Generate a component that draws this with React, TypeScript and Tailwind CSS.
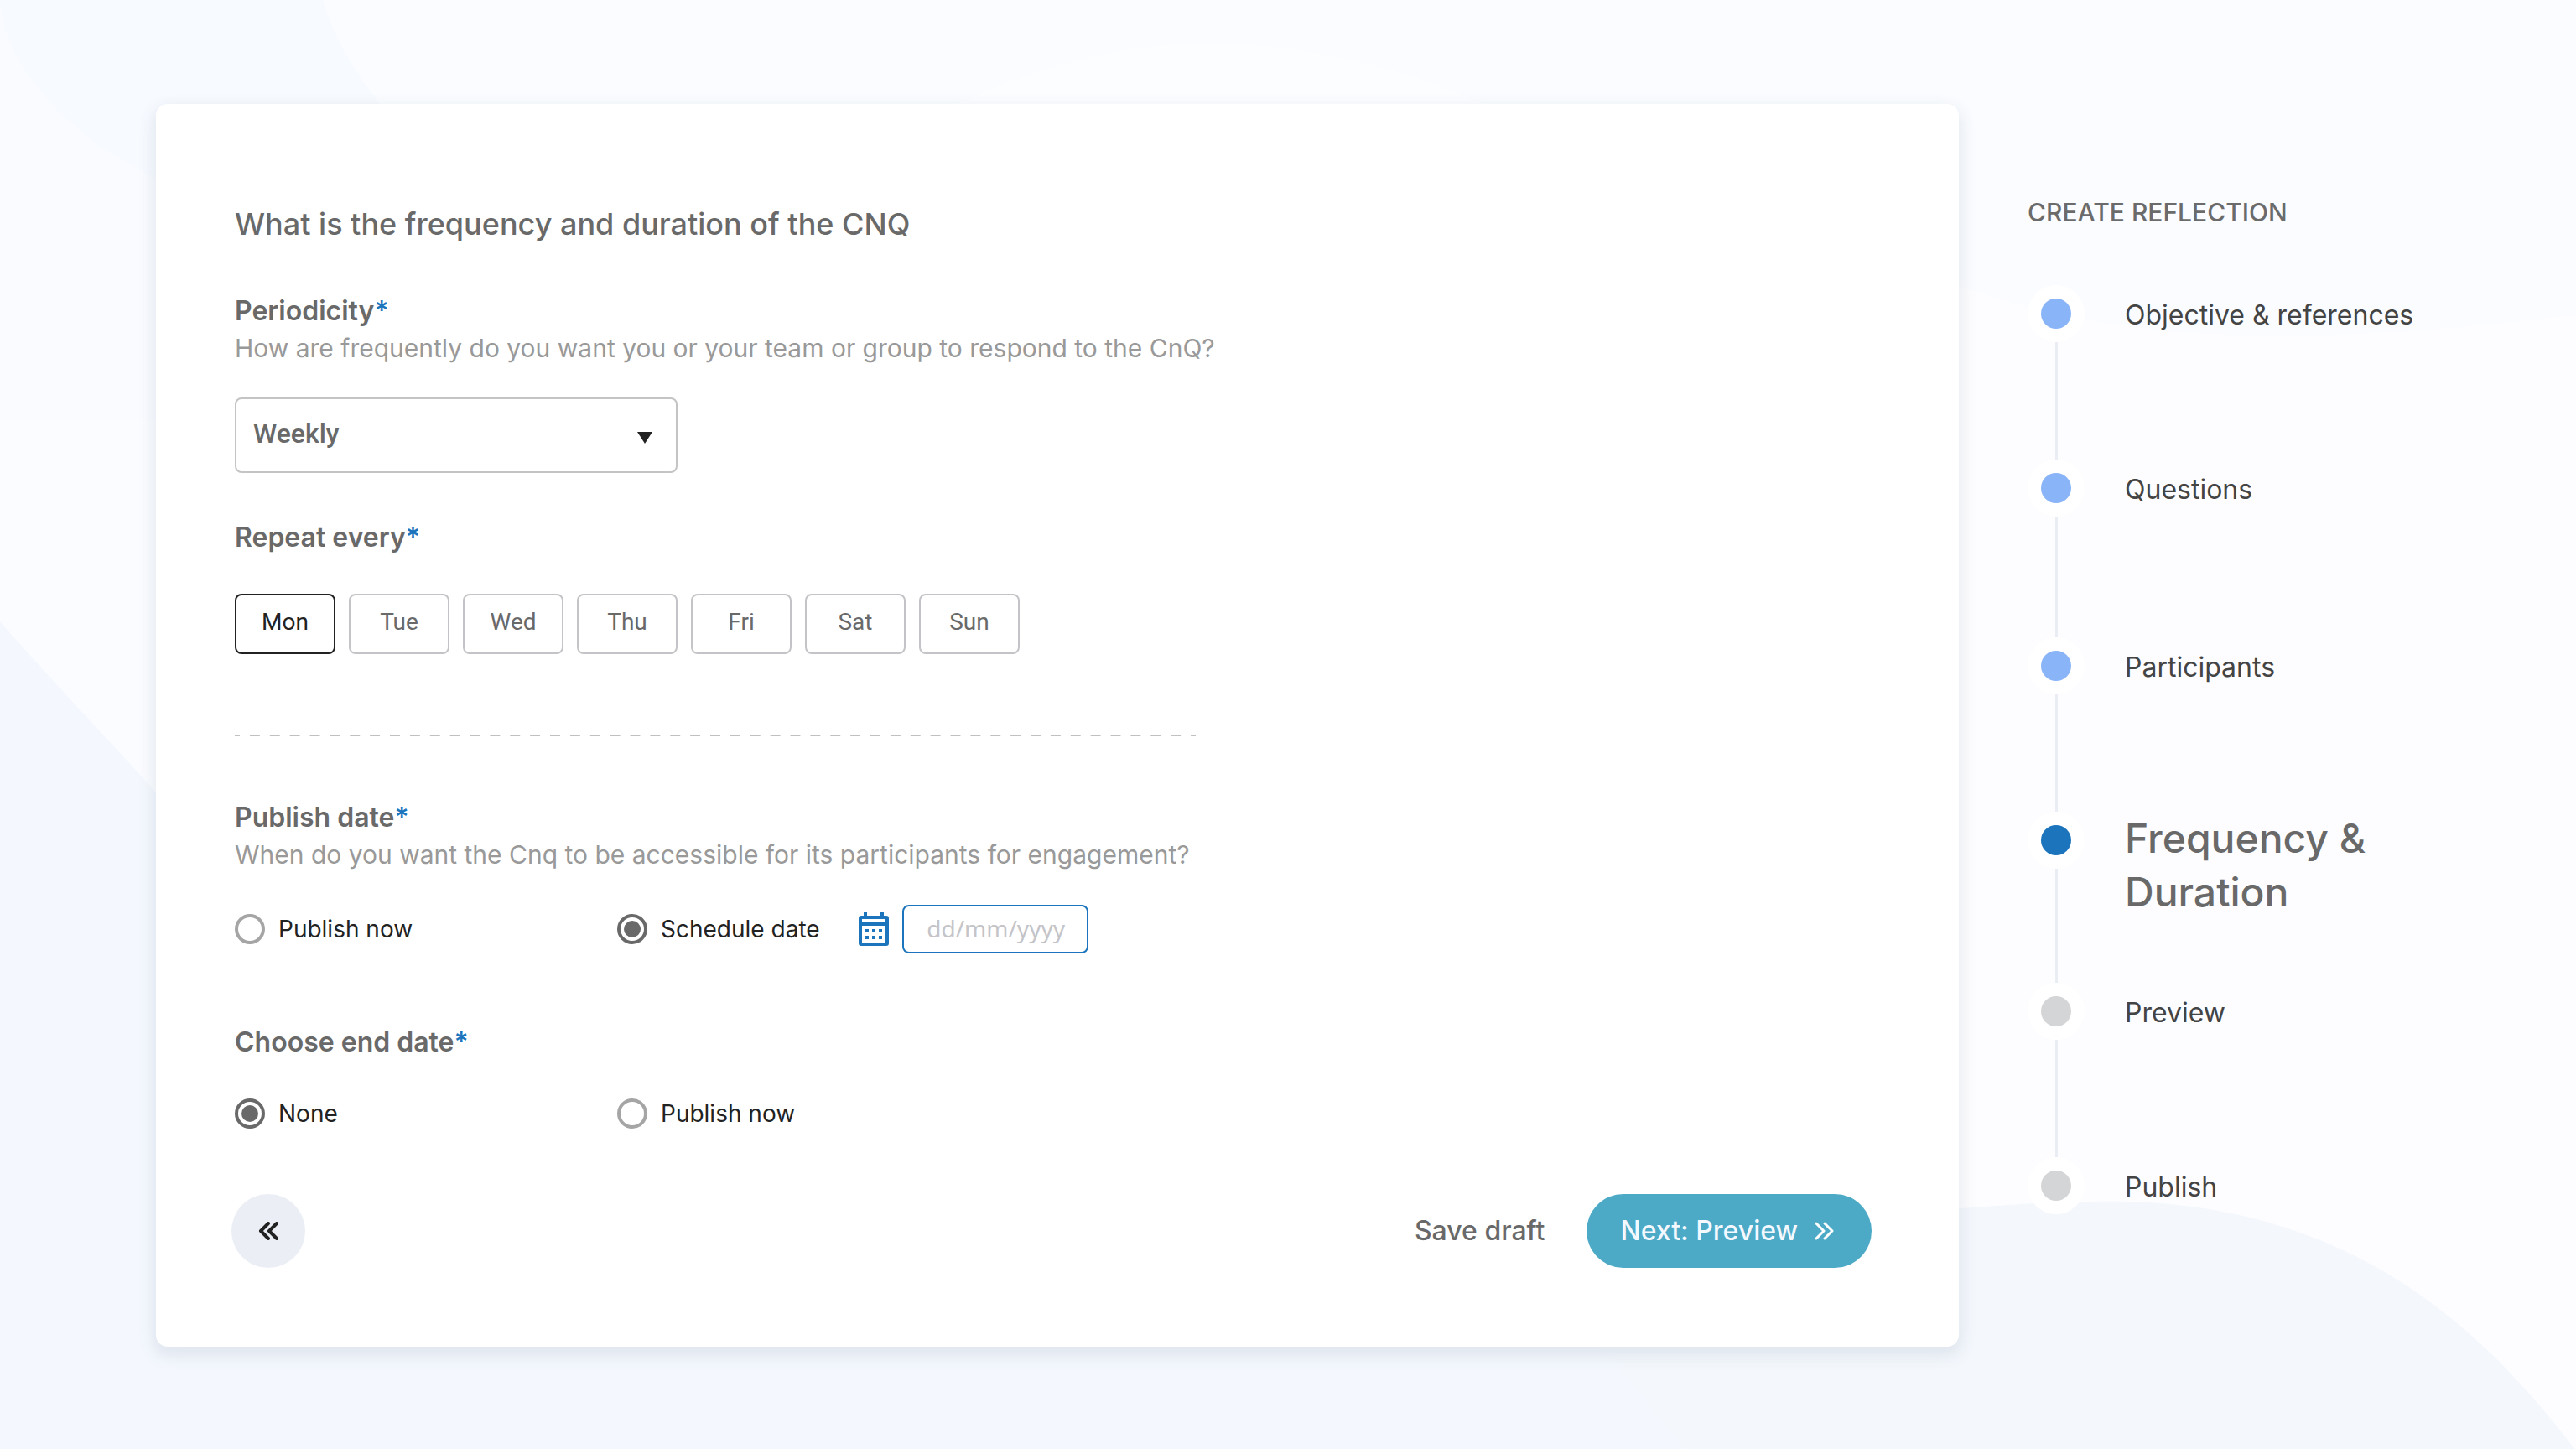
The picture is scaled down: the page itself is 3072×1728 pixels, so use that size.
import React, { useState } from 'react';

const DAYS = ['Mon', 'Tue', 'Wed', 'Thu', 'Fri', 'Sat', 'Sun'];

type StepState = 'done' | 'current' | 'todo';

const STEPS: { label: string; state: StepState }[] = [
  { label: 'Objective & references', state: 'done' },
  { label: 'Questions', state: 'done' },
  { label: 'Participants', state: 'done' },
  { label: 'Frequency & Duration', state: 'current' },
  { label: 'Preview', state: 'todo' },
  { label: 'Publish', state: 'todo' },
];

const DOT_COLORS: Record<StepState, string> = {
  done: 'bg-[#8ab4f8]',
  current: 'bg-[#1c75bc]',
  todo: 'bg-[#d4d5d7]',
};

const Backdrop = () => (
  <svg
    className="absolute inset-0 -z-10 h-full w-full"
    viewBox="0 0 3072 1728"
    preserveAspectRatio="none"
    aria-hidden="true"
  >
    <rect width="3072" height="1728" fill="#fafcff" />
    <path d="M0 0H385C400 50 425 90 470 145L700 500H0Z" fill="#f7faff" />
    <path d="M0 0C5 70 60 130 120 175L190 215V500H0Z" fill="#f9fbff" />
    <path d="M1130 130C1250 70 1350 52 1450 52S1680 80 1780 130Z" fill="#fcfdff" />
    <path d="M2336 340C2500 400 2700 420 3072 375V1728H2336Z" fill="#fdfdff" />
    <path d="M0 740C60 810 130 880 200 960V1590H1920L2010 1728H0Z" fill="#f4f8fe" />
    <path d="M1900 1590L2010 1728H3072C2960 1580 2800 1432 2520 1431C2440 1431 2380 1436 2330 1440V1590Z" fill="#f4f8fd" />
  </svg>
);

const Label = ({ children, htmlFor }: { children: React.ReactNode; htmlFor?: string }) => {
  const Tag = htmlFor ? 'label' : 'span';
  return (
    <Tag htmlFor={htmlFor} className="block text-[32px] leading-[44px] font-semibold text-[#696969]">
      {children}
      <span className="text-[#1c75bc]">*</span>
    </Tag>
  );
};

interface RadioProps {
  name: string;
  label: string;
  checked: boolean;
  onChange: () => void;
}

const Radio: React.FC<RadioProps> = ({ name, label, checked, onChange }) => (
  <label className="flex items-center gap-4 text-[28px] leading-9 text-[#222]">
    <input
      type="radio"
      name={name}
      checked={checked}
      onChange={onChange}
      className="size-9 appearance-none rounded-full border-4 border-[#a5a5a5] bg-clip-content p-1 checked:border-[#696969] checked:bg-[#696969]"
    />
    {label}
  </label>
);

const CalendarIcon = () => (
  <svg width="36" height="40" viewBox="0 0 36 40" fill="#1c75bc" aria-hidden="true">
    <rect x="6" width="4" height="5" />
    <rect x="26" width="4" height="5" />
    <rect x="2" y="6" width="32" height="32" rx="1" fill="none" stroke="#1c75bc" strokeWidth="4" />
    <rect x="2" y="12" width="32" height="4" />
    {[8, 16, 24].map(x => (
      <React.Fragment key={x}>
        <rect x={x} y="20" width="4" height="4" />
        <rect x={x} y="28" width="4" height="4" />
      </React.Fragment>
    ))}
  </svg>
);

const Stepper = () => (
  <aside className="w-[736px] shrink-0 pt-[107px] pl-[82px]">
    <h2 className="text-[30px] leading-[44px] font-medium text-[#6b6b6b]">CREATE REFLECTION</h2>
    <ol className="mt-[65px] grid grid-rows-[208px_212px_208px_204px_208px_68px]">
      {STEPS.map((step, i) => (
        <li key={step.label} className="flex gap-[48px]">
          <div className="flex flex-col items-center">
            <span className="grid size-[68px] shrink-0 place-items-center rounded-full bg-white">
              <span className={`size-9 rounded-full ${DOT_COLORS[step.state]}`} />
            </span>
            {i < STEPS.length - 1 && <span className="w-[3px] flex-1 bg-[#eaedf4]" />}
          </div>
          {step.state === 'current' ? (
            <span className="w-[340px] text-[48px] leading-[64px] font-medium text-[#696969]">{step.label}</span>
          ) : (
            <span className="text-[32px] leading-[72px] text-[#444]">{step.label}</span>
          )}
        </li>
      ))}
    </ol>
  </aside>
);

export default function App() {
  const [day, setDay] = useState('Mon');
  const [publish, setPublish] = useState('schedule');
  const [end, setEnd] = useState('none');

  return (
    <div className="relative isolate flex min-h-screen items-start overflow-hidden py-[124px] pl-[186px] font-['Inter',sans-serif]">
      <Backdrop />

      <main className="flex-1 rounded-[14px] bg-white pt-[118px] pr-[104px] pb-[94px] pl-[94px] shadow-[0_8px_18px_4px_rgba(60,80,110,0.1)]">
        <h1 className="text-[36px] leading-[50px] font-medium text-[#696969]">
          What is the frequency and duration of the CNQ
        </h1>

        {/* Periodicity */}
        <section className="mt-[57px]">
          <Label htmlFor="periodicity">Periodicity</Label>
          <p className="text-[30px] leading-[44px] text-[#999]">
            How are frequently do you want you or your team or group to respond to the CnQ?
          </p>
          <div className="relative mt-[37px] w-[528px]">
            <select
              id="periodicity"
              className="h-[90px] w-full appearance-none rounded-lg border-2 border-[#c4c4c4] bg-white px-5 pb-1 font-['Roboto',sans-serif] text-[32px] font-medium text-[#696969]"
            >
              <option>Weekly</option>
              <option>Monthly</option>
            </select>
            <svg
              className="pointer-events-none absolute top-[41px] right-[30px]"
              width="18"
              height="14"
              viewBox="0 0 18 14"
              fill="#222"
              aria-hidden="true"
            >
              <path d="M0 0H18L9 14Z" />
            </svg>
          </div>
        </section>

        {/* Repeat every */}
        <section className="mt-[55px]">
          <Label>Repeat every</Label>
          <div className="mt-[45px] flex gap-4">
            {DAYS.map(d => (
              <button
                key={d}
                type="button"
                aria-pressed={d === day}
                onClick={() => setDay(d)}
                className={`h-[72px] w-[120px] rounded-lg border-2 pb-1 font-['Roboto',sans-serif] text-[28px] ${
                  d === day ? 'border-[#222] text-[#222]' : 'border-[#c4c4c8] text-[#696969]'
                }`}
              >
                {d}
              </button>
            ))}
          </div>
        </section>

        <svg className="mt-[96px] block h-[2px] w-[1146px]" aria-hidden="true">
          <line
            x1="0"
            y1="1"
            x2="1146"
            y2="1"
            pathLength="1152"
            stroke="#c0c0c0"
            strokeWidth="2"
            strokeDasharray="12 12"
            strokeDashoffset="6"
          />
        </svg>

        {/* Publish date */}
        <section className="mt-[75px]">
          <Label>Publish date</Label>
          <p className="text-[30px] leading-[44px] text-[#999]">
            When do you want the Cnq to be accessible for its participants for engagement?
          </p>
          <div className="mt-[37px] flex h-[60px] items-center">
            <div className="w-[456px]">
              <Radio name="publish" label="Publish now" checked={publish === 'now'} onChange={() => setPublish('now')} />
            </div>
            <Radio
              name="publish"
              label="Schedule date"
              checked={publish === 'schedule'}
              onChange={() => setPublish('schedule')}
            />
            <div className="ml-[46px] flex items-center gap-4">
              <CalendarIcon />
              <input
                type="text"
                aria-label="Schedule date"
                placeholder="dd/mm/yyyy"
                className="h-[58px] w-[222px] rounded-lg border-2 border-[#1c75bc] bg-white pb-[2px] pl-[2px] text-center font-['Noto_Sans',sans-serif] text-[28px] placeholder:text-[#c4c4c8]"
              />
            </div>
          </div>
        </section>

        {/* End date */}
        <section className="mt-[83px]">
          <Label>Choose end date</Label>
          <div className="mt-[45px] flex items-center">
            <div className="w-[456px]">
              <Radio name="end" label="None" checked={end === 'none'} onChange={() => setEnd('none')} />
            </div>
            <Radio name="end" label="Publish now" checked={end === 'now'} onChange={() => setEnd('now')} />
          </div>
        </section>

        <footer className="mt-[78px] -ml-1 flex items-center">
          <button type="button" aria-label="Back" className="grid size-[88px] place-items-center rounded-full bg-[#ebeff5]">
            <svg
              width="24"
              height="22"
              viewBox="0 0 24 22"
              fill="none"
              stroke="#222"
              strokeWidth="4"
              strokeLinecap="round"
              strokeLinejoin="round"
              aria-hidden="true"
            >
              <path d="M12 2L3 11L12 20M22 2L13 11L22 20" />
            </svg>
          </button>
          <button type="button" className="ml-auto text-[32px] font-medium text-[#696969]">
            Save draft
          </button>
          <button
            type="button"
            className="ml-[50px] flex h-[88px] items-center gap-5 rounded-full bg-[#4daac7] pr-[44px] pl-[40px] text-[32px] font-medium text-[#f4f8ff]"
          >
            Next: Preview
            <svg
              width="24"
              height="22"
              viewBox="0 0 24 22"
              fill="none"
              stroke="#fff"
              strokeWidth="3"
              strokeLinecap="round"
              strokeLinejoin="round"
              aria-hidden="true"
            >
              <path d="M2 2L11 11L2 20M12 2L21 11L12 20" />
            </svg>
          </button>
        </footer>
      </main>

      <Stepper />
    </div>
  );
}
